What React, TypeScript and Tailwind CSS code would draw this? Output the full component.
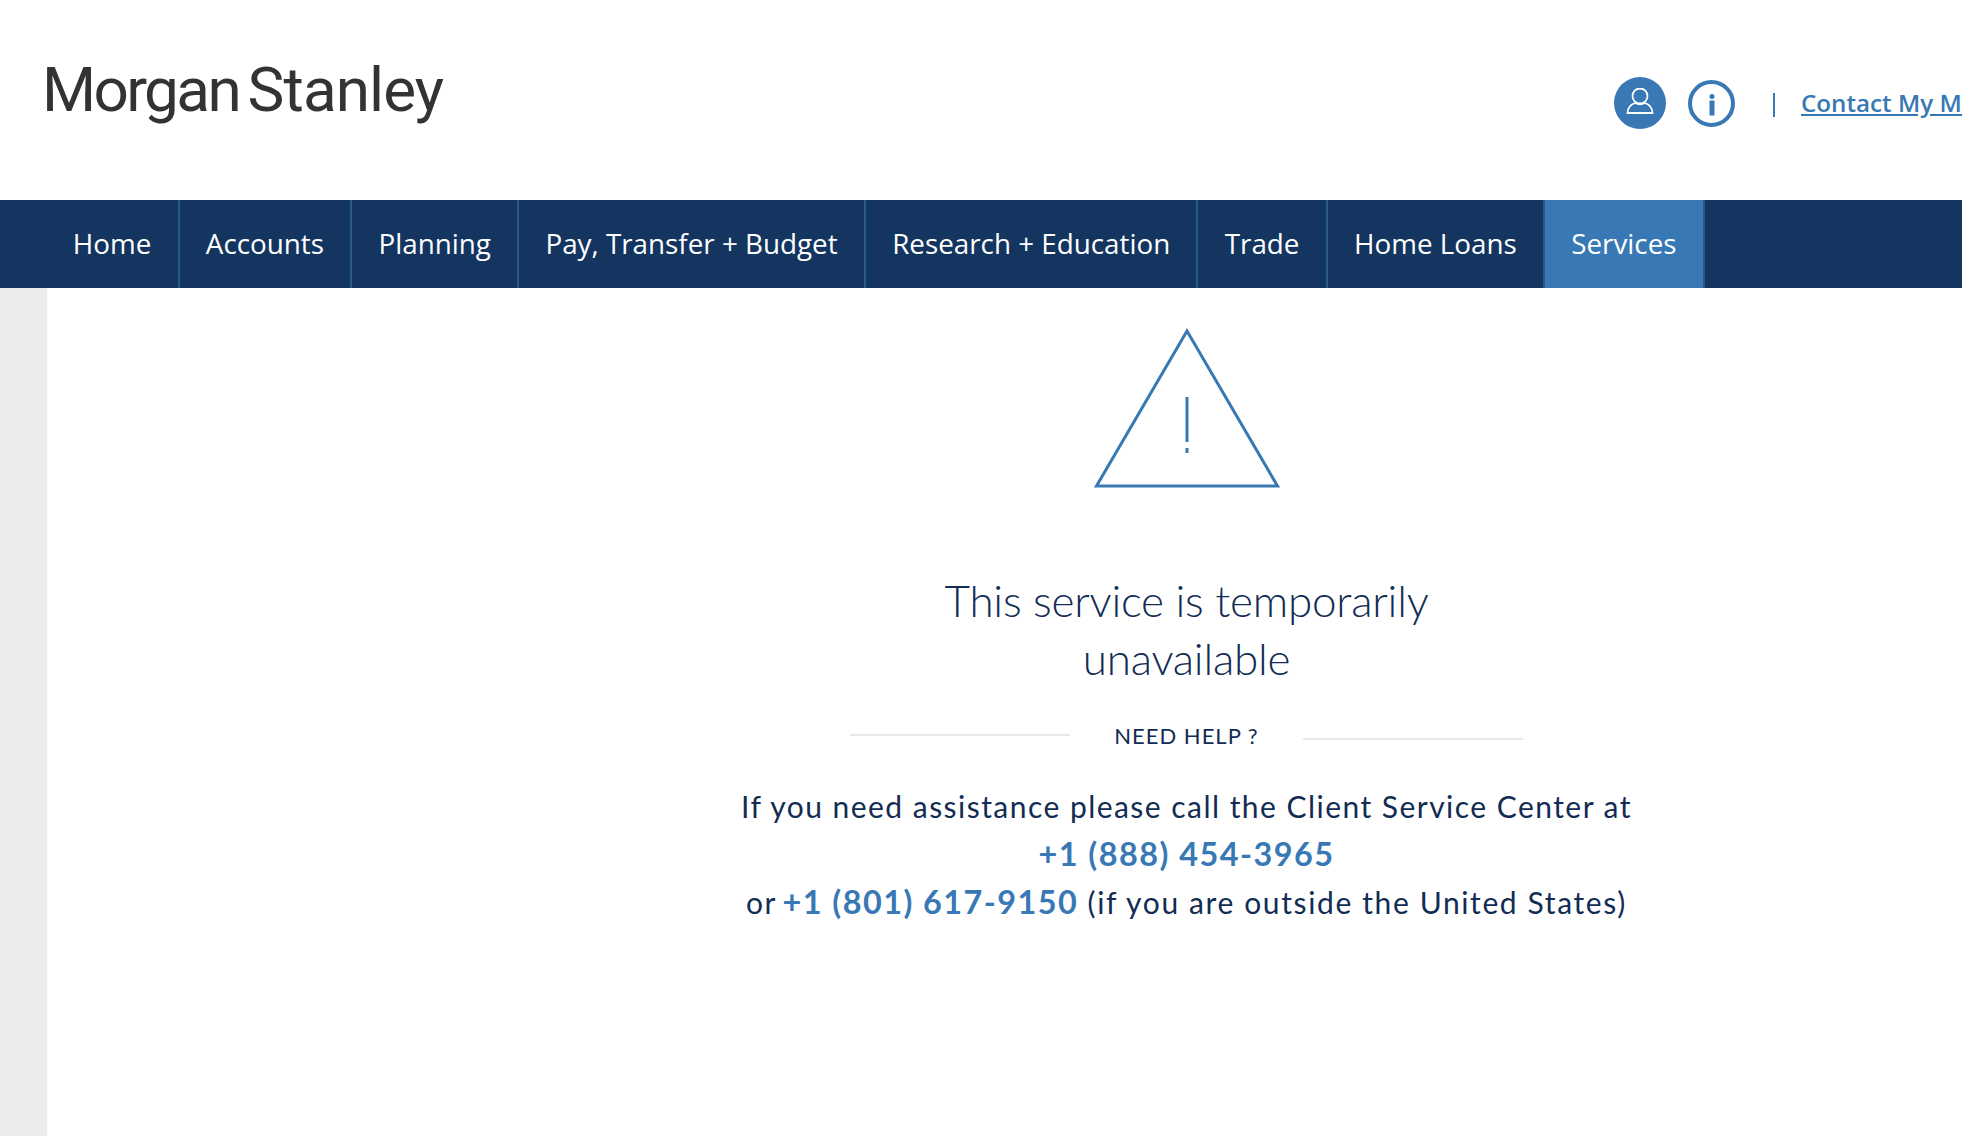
import React from 'react';

const navItems = ['Home', 'Accounts', 'Planning', 'Pay, Transfer + Budget', 'Research + Education', 'Trade', 'Home Loans', 'Services'];

const App: React.FC = () => {
  return (
    <div className="h-[1136px] w-[1962px] overflow-hidden bg-white font-['Open_Sans',sans-serif]">
      {/* Header */}
      <header className="flex h-[200px] items-start justify-between pl-[42px]">
        <div className="mt-[48px] text-[62px] leading-[84px] font-normal text-[#333333] font-['Roboto',sans-serif] whitespace-nowrap">
          <span className="tracking-[-2.600px]">Morgan</span>
          <span className="ml-[-6px] tracking-[-0.900px]"> Stanley</span>
        </div>
        <div className="mt-[77px] flex items-center">
          <span className="flex h-[52px] w-[52px] items-center justify-center rounded-full bg-[#3878b4]">
            <svg width="30" height="30" viewBox="0 0 30 30" fill="none" stroke="#ffffff" strokeWidth="1.800">
              <circle cx="15" cy="8" r="7.500" />
              <path d="M2.500 25C2.500 20 6 16.500 10 15C13 16.500 17 16.500 20 15C24 16.500 27.500 20 27.500 25Z" />
            </svg>
          </span>
          <span className="ml-[22px] flex h-[47px] w-[47px] items-center justify-center rounded-full border-[4px] border-[#3878b4]">
            <svg width="10" height="26" viewBox="0 0 10 26" fill="#3878b4">
              <circle cx="5" cy="6.500" r="2.500" />
              <rect x="2.500" y="10.500" width="5" height="15" />
            </svg>
          </span>
          <span className="ml-[38px] h-[24px] w-[2px] translate-y-[2px] bg-[#3878b4]" />
          <a className="ml-[26px] w-[161px] overflow-hidden whitespace-nowrap text-[24.200px] leading-[32px] font-semibold text-[#3878b4] underline">
            Contact My Mo
          </a>
        </div>
      </header>

      {/* Navigation */}
      <nav className="flex h-[88px] bg-[#13355f] pl-[46.500px] text-[27.800px] text-white">
        {navItems.map((item) => (
          <div
            key={item}
            className={`flex items-center border-r-2 border-[#2a5a8c] px-[26.250px] whitespace-nowrap ${
              item === 'Services' ? 'bg-[#3878b4]' : ''
            }`}
          >
            {item}
          </div>
        ))}
      </nav>

      <div className="flex h-[848px]">
        <aside className="w-[47px] bg-[#ececec]" />

        {/* Error message */}
        <main className="ml-[689.500px] flex w-[900px] flex-col items-center font-['Lato',sans-serif] text-[#122c54]">
          <svg className="mt-[39px]" width="186" height="162" viewBox="0 0 186 162" fill="none" stroke="#3878b4">
            <path d="M93 4 L183.500 159 H2.500 Z" strokeWidth="3" />
            <path d="M93 70 V115" strokeWidth="3" />
            <path d="M93 121 V126" strokeWidth="3" />
          </svg>

          <h1 className="mt-[82px] text-center text-[44px] leading-[58px] font-light tracking-[-0.230px]">
            This service is temporarily
            <br />
            unavailable
          </h1>

          <div className="mt-[34px] flex w-[674px] items-center justify-between">
            <span className="h-[2px] w-[220px] translate-y-[-1px] bg-[#e8e8e8]" />
            <span className="text-[22px] leading-[30px] tracking-[1px]">NEED HELP ?</span>
            <span className="h-[2px] w-[220px] translate-y-[3px] bg-[#e8e8e8]" />
          </div>

          <p className="mt-[31px] text-center text-[30px] leading-[48px] tracking-[1.460px] whitespace-nowrap">
            If you need assistance please call the Client Service Center at
            <br />
            <a className="text-[32.400px] font-bold text-[#3878b4]">+1 (888) 454-3965</a>
            <br />
            or <a className="ml-[-3px] text-[32.400px] font-bold text-[#3878b4]">+1 (801) 617-9150</a>{' '}
            <span className="tracking-[1.620px]">(if you are outside the United States)</span>
          </p>
        </main>
      </div>
    </div>
  );
};

export default App;
